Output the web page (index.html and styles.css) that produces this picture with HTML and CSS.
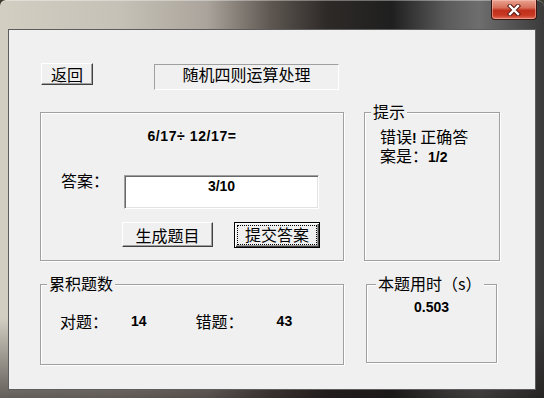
FILE: index.html
```html
<!DOCTYPE html>
<html lang="zh-CN">
<head>
  <meta charset="UTF-8">
  <title>随机四则运算处理</title>
  <link rel="stylesheet" href="styles.css">
</head>
<body>

<div class="window">
  <div class="titlebar">
    <button class="close-btn" title="关闭">
      <svg width="14" height="12" viewBox="0 0 14 12">
        <path d="M3 2 L11 10 M11 2 L3 10" stroke="#5a1a14" stroke-width="4.4" stroke-linecap="square"/>
        <path d="M3 2 L11 10 M11 2 L3 10" stroke="#fff" stroke-width="2.4" stroke-linecap="square"/>
      </svg>
    </button>
  </div>

  <div class="client">
    <div class="top-row">
      <button class="btn back-btn">返回</button>
      <div class="caption">随机四则运算处理</div>
    </div>

    <div class="row">
      <div class="group main-group">
        <div class="expr">6/17÷ 12/17=</div>
        <div class="answer-row">
          <span class="label">答案：</span>
          <div class="field">3/10</div>
        </div>
        <div class="btn-row">
          <button class="btn gen-btn">生成题目</button>
          <button class="btn submit-btn"><span class="focus">提交答案</span></button>
        </div>
      </div>

      <div class="group hint-group">
        <span class="group-title">提示</span>
        <div class="hint-text">
          <div>错误<b>!</b> 正确答</div>
          <div>案是：<b>1/2</b></div>
        </div>
      </div>
    </div>

    <div class="row second">
      <div class="group count-group">
        <span class="group-title">累积题数</span>
        <div class="count-row">
          <span class="label">对题：</span>
          <span class="num right-num">14</span>
          <span class="label wrong-label">错题：</span>
          <span class="num wrong-num">43</span>
        </div>
      </div>

      <div class="group time-group">
        <span class="group-title">本题用时（s）</span>
        <div class="time-val">0.503</div>
      </div>
    </div>
  </div>
</div>

</body>
</html>
```

FILE: styles.css
```css
html, body {
  margin: 0;
  padding: 0;
  background: #3b3a2c;
}
body {
  width: 544px;
  height: 398px;
  overflow: hidden;
  font-family: "Noto Sans CJK SC", "Liberation Sans", sans-serif;
  font-size: 16px;
  color: #000;
}
.window {
  width: 544px;
  height: 398px;
  box-sizing: border-box;
  padding: 0 8px 8px;
  display: flex;
  flex-direction: column;
  border-radius: 6px 6px 0 0;
  box-shadow: inset 0 1px rgba(255, 255, 255, 0.35);
  background:
    linear-gradient(to bottom, rgba(0, 0, 0, 0) 0, rgba(0, 0, 0, 0) 80%, rgba(25, 20, 20, 0.6) 100%),
    linear-gradient(to right, #d2cec2 0%, #c6c1b6 22%, #aaa49c 38%, #5d5650 50%, #2e2a28 60%, #1f1f1f 72%, #5b5b5b 82%, #6e6e6e 88%, #3a3a3a 100%);
}
.titlebar {
  height: 29px;
  flex-shrink: 0;
  display: flex;
  justify-content: flex-end;
  align-items: flex-start;
}
.close-btn {
  width: 46px;
  height: 20px;
  margin-right: -1px;
  padding: 0;
  border: 1px solid #3a1410;
  border-top: none;
  border-radius: 0 0 4px 4px;
  background: linear-gradient(to bottom, #e9a390 0%, #d7705a 40%, #c0301c 55%, #c83822 80%, #e0705a 100%);
  box-shadow: inset 0 0 0 1px rgba(255, 200, 190, 0.5);
  display: flex;
  align-items: center;
  justify-content: center;
}
.client {
  flex: 1;
  background: #f0f0f0;
  border: 1px solid #5c5c5c;
  box-sizing: border-box;
}

/* controls */
.btn {
  font-family: "Noto Sans CJK SC", sans-serif;
  font-size: 16px;
  line-height: 16px;
  padding: 0;
  background: #f0f0f0;
  color: #000;
  border: 1px solid;
  border-color: #fff #404040 #404040 #fff;
  box-shadow: inset -1px -1px #a0a0a0;
  box-sizing: border-box;
}
.top-row {
  display: flex;
  align-items: flex-start;
  padding: 33px 0 0 32px;
}
.back-btn {
  width: 52px;
  height: 22px;
}
.caption {
  width: 185px;
  height: 26px;
  margin: 1px 0 0 61px;
  box-sizing: border-box;
  border: 1px solid;
  border-color: #a0a0a0 #fff #fff #a0a0a0;
  text-align: center;
  line-height: 16px;
  padding-top: 1px;
}

.row {
  display: flex;
  align-items: flex-start;
  margin-top: 22px;
  padding-left: 31px;
}
.row.second {
  margin-top: 23px;
}
.group {
  position: relative;
  box-sizing: border-box;
  border: 1px solid #a0a0a0;
  box-shadow: 1px 1px #fff, inset 1px 1px #fff;
}
.group-title {
  position: absolute;
  top: -11px;
  left: 6px;
  padding: 0 2px;
  background: #f0f0f0;
  line-height: 18px;
  white-space: nowrap;
}
.label {
  line-height: 16px;
  white-space: nowrap;
}
.num, .expr, .field, .time-val, b {
  font-family: "Liberation Sans", Arial, sans-serif;
  font-weight: bold;
  font-size: 14px;
  line-height: 16px;
}

.main-group {
  width: 304px;
  height: 149px;
}
.expr {
  margin-top: 15px;
  text-align: center;
  letter-spacing: 0.6px;
}
.answer-row {
  display: flex;
  align-items: flex-start;
  margin-top: 31px;
  padding-left: 20px;
}
.answer-row .label {
  margin-top: -3px;
}
.field {
  width: 195px;
  height: 34px;
  margin-left: 15px;
  box-sizing: border-box;
  background: #fff;
  border: 1px solid;
  border-color: #a0a0a0 #fff #fff #a0a0a0;
  box-shadow: inset 1px 1px #696969, inset -1px -1px #e3e3e3;
  text-align: center;
  padding-top: 2px;
}
.btn-row {
  display: flex;
  align-items: flex-start;
  margin-top: 13px;
  padding-left: 81px;
}
.gen-btn {
  width: 91px;
  height: 25px;
}
.submit-btn {
  width: 86px;
  height: 26px;
  margin-left: 21px;
  border: 1px solid #000;
  box-shadow: inset 1px 1px #fff, inset -1px -1px #404040, inset -2px -2px #a0a0a0;
  padding: 3px;
}
.submit-btn .focus {
  display: block;
  height: 100%;
  box-sizing: border-box;
  outline: 1px dotted #000;
  line-height: 17px;
}

.hint-group {
  width: 136px;
  height: 149px;
  margin-left: 20px;
}
.hint-text {
  padding: 15px 0 0 15px;
  line-height: 17px;
  white-space: nowrap;
}
.hint-text b {
  line-height: 17px;
}

.count-group {
  width: 304px;
  height: 81px;
}
.count-row {
  display: flex;
  align-items: flex-start;
  padding: 28px 0 0 19px;
}
.right-num {
  margin-left: 23px;
}
.wrong-label {
  margin-left: 49px;
}
.wrong-num {
  margin-left: 33px;
}

.time-group {
  width: 131px;
  height: 79px;
  margin-left: 22px;
}
.time-group .group-title {
  left: 9px;
}
.time-val {
  text-align: center;
  padding-top: 14px;
}
```
